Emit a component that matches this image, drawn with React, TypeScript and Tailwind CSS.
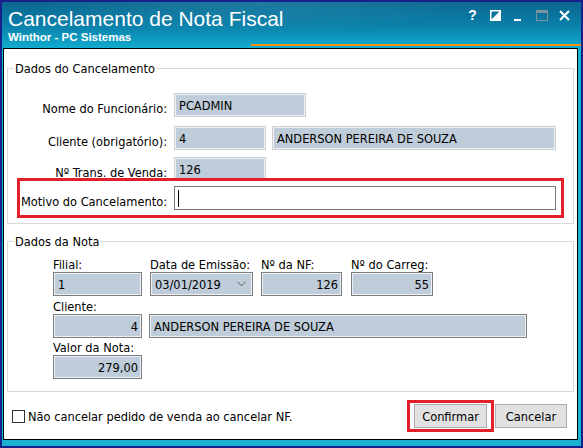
import type { ReactNode } from 'react';

const ui = "font-['DejaVu_Sans_Condensed','Liberation_Sans',sans-serif] text-[12.7px] text-black";

type BoxProps = {
  w: string;
  value?: string;
  right?: boolean;
  dark?: boolean;
  children?: ReactNode;
};

// read-only field with the blue-gray fill
const Box = ({ w, value, right, dark, children }: BoxProps) => (
  <div
    className={`${w} h-[24px] flex items-center bg-[#bfccd9] border shadow-[inset_0_0_0_1px_#eef1f4] leading-[15px] ${
      dark ? 'border-[#7d7d7d]' : 'border-[#cfcfcf]'
    } ${right ? 'justify-end pr-[3px]' : 'pl-[4px]'}`}
  >
    {value}
    {children}
  </div>
);

const Label = ({ children }: { children: ReactNode }) => (
  <div className="w-[159px] shrink-0 text-right leading-[15px] pb-[1px]">{children}</div>
);

const Group = ({ title, className, children }: { title: string; className: string; children: ReactNode }) => (
  <div className={`relative border border-[#dadada] ${className}`}>
    <span className="absolute left-[6px] -top-[8px] bg-white px-[1px] leading-[15px]">{title}</span>
    {children}
  </div>
);

const TitleButtons = () => (
  <div className="flex items-start pt-[7px] mr-[5px]">
    <div className="w-[23px] flex justify-center">
      <span className="font-['Liberation_Sans',sans-serif] font-bold text-[14px] leading-[12px] text-white">?</span>
    </div>
    <div className="w-[23px] flex justify-center pt-[1px]">
      <svg width="11" height="11" viewBox="0 0 11 11">
        <rect x="0.75" y="0.75" width="9.5" height="9.5" fill="none" stroke="#fff" strokeWidth="1.5" />
        <polygon points="10.25,0.75 10.25,10.25 0.75,10.25" fill="#fff" />
      </svg>
    </div>
    <div className="w-[23px] flex justify-center pr-[3px]">
      <div className="w-[7px] h-[2px] bg-white mt-[10px]" />
    </div>
    <div className="w-[23px] flex justify-center pt-[1px]">
      <svg width="12" height="11" viewBox="0 0 12 11">
        <rect x="0.5" y="0.5" width="11" height="10" fill="none" stroke="#7d93a1" />
        <rect x="0.5" y="0.5" width="11" height="2.5" fill="#7d93a1" />
      </svg>
    </div>
    <div className="w-[23px] flex justify-center pt-[1px]">
      <svg width="11" height="11" viewBox="0 0 11 11">
        <path d="M1 1 L10 10 M10 1 L1 10" stroke="#fff" strokeWidth="2" />
      </svg>
    </div>
  </div>
);

export default function App() {
  return (
    <div className="w-[583px] h-[448px] bg-[#17208c] p-[2px]">
      <div className="h-full flex flex-col bg-[#19b2d1]">
        {/* title bar */}
        <div className="h-[46px] shrink-0 flex flex-col bg-[radial-gradient(ellipse_60%_90%_at_45%_0%,rgba(120,210,235,0.18),transparent_70%),linear-gradient(180deg,#0a668e_0%,#0b7fa9_50%,#11acce_100%)]">
          <div className="flex justify-between">
            <div className="pl-[6px] pt-[5px]">
              <div className="font-['Liberation_Sans',sans-serif] text-[21px] leading-[24px] text-white">
                Cancelamento de Nota Fiscal
              </div>
              <div className="font-['Liberation_Sans',sans-serif] font-bold text-[11.5px] leading-[13px] text-white">
                Winthor - PC Sistemas
              </div>
            </div>
            <TitleButtons />
          </div>
          <div className="mt-auto mb-[2px] ml-[249px] h-[2px] bg-[#f3920f]" />
        </div>

        {/* form body */}
        <div className={`ml-[1px] mr-[3px] h-[392px] shrink-0 border border-black bg-white px-[3px] flex flex-col ${ui}`}>
          <Group title="Dados do Cancelamento" className="mt-[19px] h-[156px] pt-[24px]">
            <div className="flex items-end gap-[7px]">
              <Label>Nome do Funcionário:</Label>
              <Box w="w-[132px]" value="PCADMIN" />
            </div>
            <div className="flex items-end gap-[7px] mt-[9px]">
              <Label>Cliente (obrigatório):</Label>
              <Box w="w-[92px]" value="4" />
              <div className="ml-[-1px]">
                <Box w="w-[284px]" value="ANDERSON PEREIRA DE SOUZA" />
              </div>
            </div>
            <div className="flex items-end gap-[7px] mt-[7px]">
              <Label>Nº Trans. de Venda:</Label>
              <Box w="w-[92px]" value="126" />
            </div>
            <div className="relative flex items-end gap-[7px] mt-[5px]">
              <Label>Motivo do Cancelamento:</Label>
              <div className="w-[382px] h-[24px] border border-[#7a7a7a] bg-white flex items-center pl-[3px]">
                <div className="w-[1px] h-[17px] bg-black" />
              </div>
              <div className="absolute left-[9px] right-[9px] -top-[8px] -bottom-[8px] border-[3px] border-[#e3202a]" />
            </div>
          </Group>

          <Group title="Dados da Nota" className="mt-[17px] h-[151px] pt-[15px] pl-[45px]">
            <div className="flex">
              <div className="flex flex-col">
                <div className="leading-[15px]">Filial:</div>
                <Box w="w-[89px]" value="1" dark />
              </div>
              <div className="flex flex-col ml-[8px]">
                <div className="leading-[15px]">Data de Emissão:</div>
                <Box w="w-[103px]" dark>
                  <span>03/01/2019</span>
                  <svg className="ml-auto mr-[6px]" width="9" height="6" viewBox="0 0 9 6">
                    <polyline points="0.5,0.8 4.5,4.8 8.5,0.8" fill="none" stroke="#5a5a5a" strokeWidth="1" />
                  </svg>
                </Box>
              </div>
              <div className="flex flex-col ml-[8px]">
                <div className="leading-[15px]">Nº da NF:</div>
                <Box w="w-[81px]" value="126" right dark />
              </div>
              <div className="flex flex-col ml-[9px]">
                <div className="leading-[15px]">Nº do Carreg:</div>
                <Box w="w-[82px]" value="55" right dark />
              </div>
            </div>
            <div className="leading-[15px] mt-[3px]">Cliente:</div>
            <div className="flex gap-[7px]">
              <Box w="w-[89px]" value="4" right dark />
              <Box w="w-[378px]" value="ANDERSON PEREIRA DE SOUZA" dark />
            </div>
            <div className="leading-[15px] mt-[2px]">Valor da Nota:</div>
            <Box w="w-[89px]" value="279,00" right dark />
          </Group>

          {/* footer */}
          <div className="mt-[12px] flex items-center">
            <div className="ml-[5px] w-[13px] h-[13px] border border-[#333] bg-white" />
            <span className="ml-[3px] leading-[15px]">Não cancelar pedido de venda ao cancelar NF.</span>
            <div className="ml-auto mr-[7px] flex gap-[8px]">
              <div className="relative">
                <button className="w-[73px] h-[24px] bg-[#e1e1e1] border border-[#adadad] leading-[15px]">Confirmar</button>
                <div className="absolute -left-[7px] -right-[7px] -top-[4px] -bottom-[4px] border-[3px] border-[#e3202a]" />
              </div>
              <button className="w-[72px] h-[24px] bg-[#e1e1e1] border border-[#adadad] leading-[15px]">Cancelar</button>
            </div>
          </div>
        </div>
      </div>
    </div>
  );
}
